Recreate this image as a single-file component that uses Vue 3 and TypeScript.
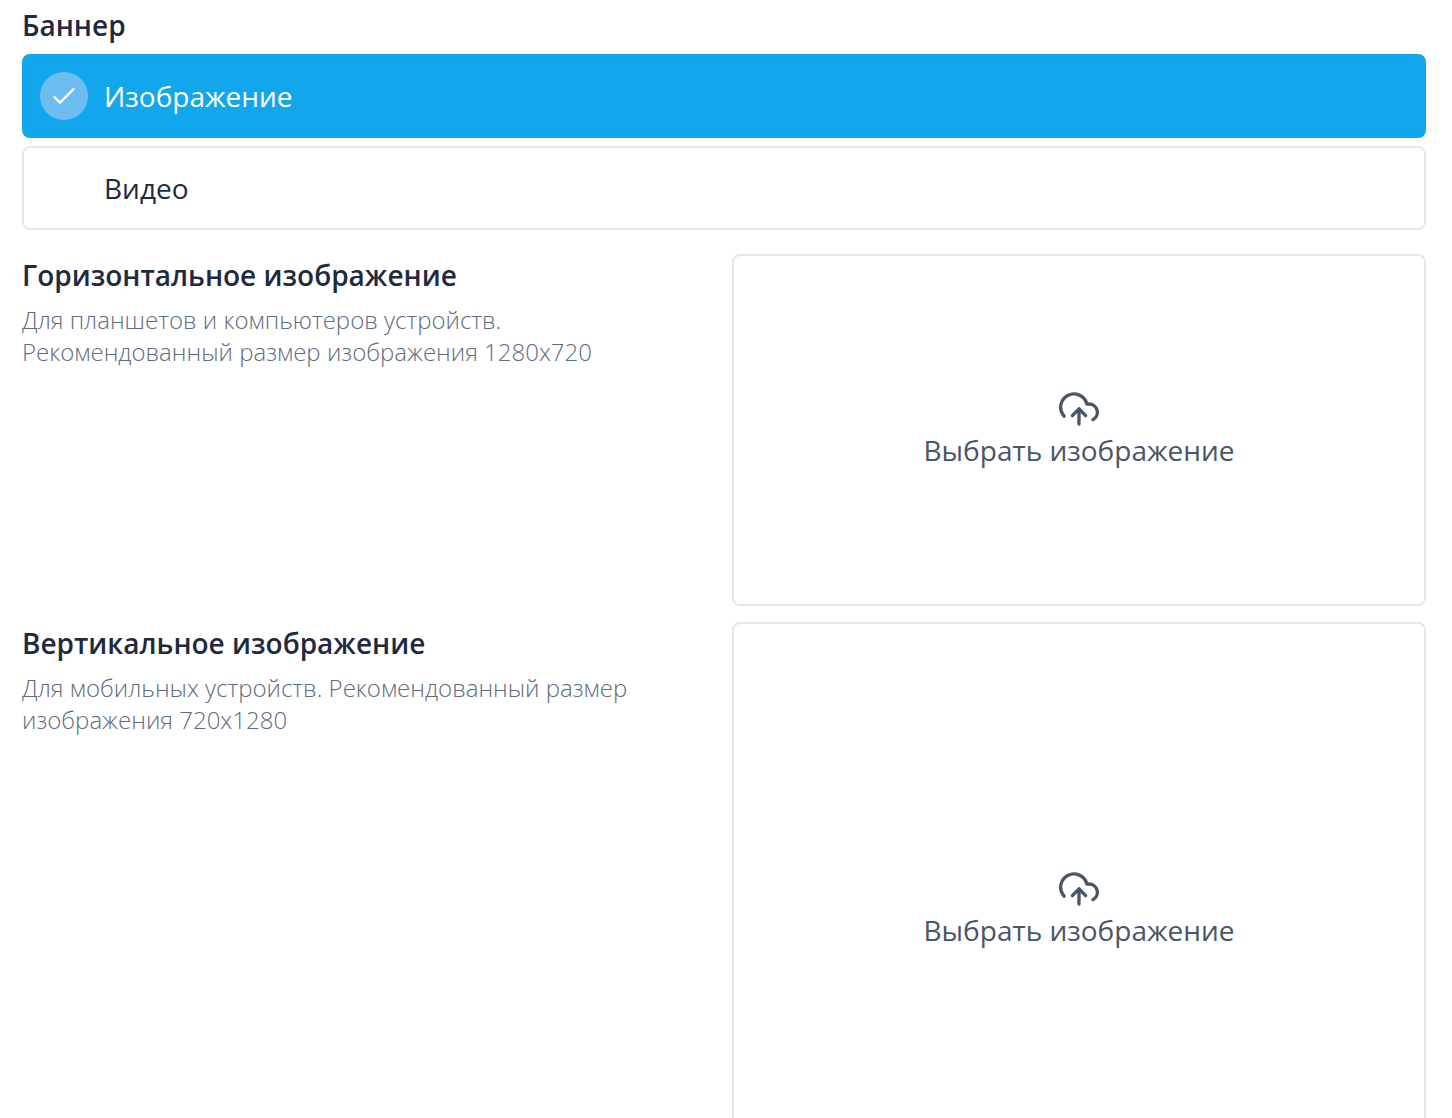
<script setup lang="ts">
interface Upload {
  title: string
  lines: string[]
  tall: boolean
}

const uploads: Upload[] = [
  {
    title: 'Горизонтальное изображение',
    lines: ['Для планшетов и компьютеров устройств.', 'Рекомендованный размер изображения 1280x720'],
    tall: false,
  },
  {
    title: 'Вертикальное изображение',
    lines: ['Для мобильных устройств. Рекомендованный размер', 'изображения 720x1280'],
    tall: true,
  },
]
</script>

<template>
  <div class="page">
    <div class="label">Баннер</div>
    <div class="option active">
      <span class="check">
        <svg width="32" height="32" viewBox="0 0 24 24" fill="none" stroke="#fff" stroke-width="1.8" stroke-linecap="round" stroke-linejoin="round">
          <path d="M5 13l4 4L19 7" />
        </svg>
      </span>
      <span>Изображение</span>
    </div>
    <div class="option">
      <span class="check-space"></span>
      <span>Видео</span>
    </div>

    <div v-for="u in uploads" :key="u.title" class="row">
      <div class="info">
        <div class="title">{{ u.title }}</div>
        <div class="hint">
          <div v-for="l in u.lines" :key="l">{{ l }}</div>
        </div>
      </div>
      <div class="drop" :class="{ tall: u.tall }">
        <svg class="cloud" width="40" height="40" viewBox="0 0 24 24" fill="none" stroke="#4a5568" stroke-width="2" stroke-linecap="round" stroke-linejoin="round">
          <polyline points="16 16 12 12 8 16" />
          <line x1="12" y1="12" x2="12" y2="21" />
          <path d="M20.39 18.39A5 5 0 0 0 18 9h-1.26A8 8 0 1 0 3 16.3" />
        </svg>
        <div class="drop-text">Выбрать изображение</div>
      </div>
    </div>
  </div>
</template>

<style scoped>
.page {
  box-sizing: border-box;
  height: 1118px;
  overflow: hidden;
  padding: 6px 26px 0 22px;
  font-family: "Open Sans", "Noto Sans", sans-serif;
  color: #1f2a40;
}
.label {
  font-size: 28px;
  line-height: 38px;
  font-weight: 600;
  margin-bottom: 10px;
}
.option {
  box-sizing: border-box;
  display: flex;
  align-items: center;
  gap: 16px;
  height: 84px;
  padding: 0 16px;
  margin-bottom: 8px;
  border: 2px solid #e5e7eb;
  border-radius: 8px;
  font-size: 28px;
}
.option.active {
  background: #12a7ec;
  border-color: #12a7ec;
  color: #fff;
}
.check {
  width: 48px;
  height: 48px;
  border-radius: 50%;
  background: #6dbdf3;
  display: flex;
  align-items: center;
  justify-content: center;
}
.check-space {
  width: 48px;
  height: 48px;
}
.row {
  display: flex;
  gap: 16px;
  margin-bottom: 16px;
}
.option + .row {
  margin-top: 24px;
}
.info {
  flex: 0 0 694px;
}
.title {
  font-size: 28px;
  line-height: 42px;
  font-weight: 600;
  margin-bottom: 8px;
}
.hint {
  font-size: 24px;
  line-height: 32px;
  font-weight: 300;
  color: #5f6b80;
}
.drop {
  box-sizing: border-box;
  flex: 1;
  height: 352px;
  border: 2px solid #e5e7eb;
  border-radius: 8px;
  display: flex;
  flex-direction: column;
  align-items: center;
  justify-content: center;
  color: #4a5568;
}
.drop.tall {
  height: 576px;
}
.drop-text {
  font-size: 28px;
  line-height: 42px;
}
</style>
